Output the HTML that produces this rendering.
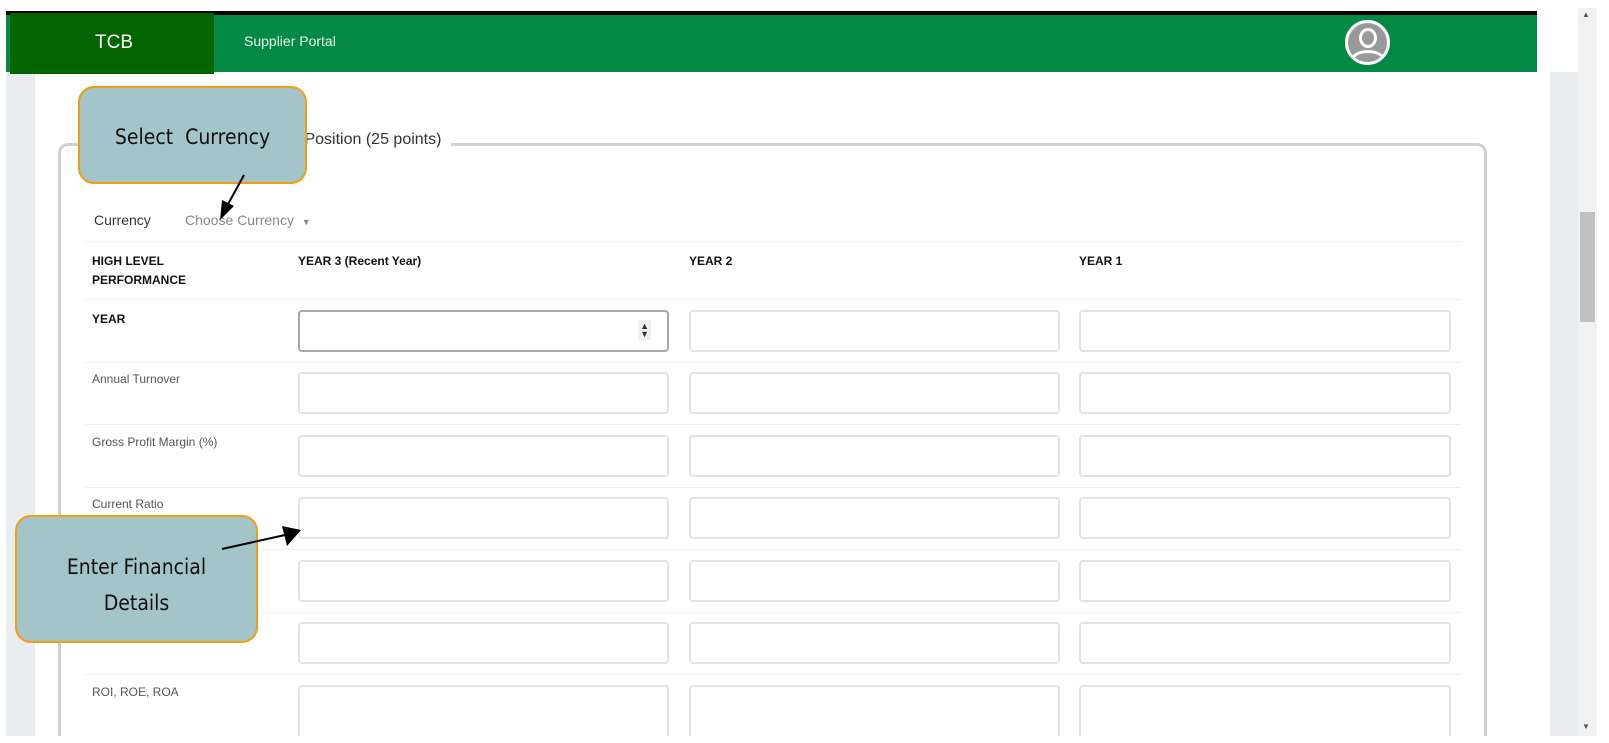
<!DOCTYPE html>
<html style="width:1609px;height:743px;overflow:hidden"><head><meta charset="utf-8"><style>
*{margin:0;padding:0;box-sizing:border-box}
body{width:1609px;height:743px;overflow:hidden;background:#fff;font-family:"Liberation Sans",sans-serif;position:relative}
.abs{position:absolute}
.inp{position:absolute;height:42px;border:2px solid #e3e3e3;border-radius:4px;background:#fff}
.sep{position:absolute;left:85px;width:1376px;height:1px;background:#eef0f2}
.lbl{position:absolute;left:92px;font-size:12px;color:#555}
.hd{position:absolute;font-size:12px;font-weight:bold;color:#111;line-height:19px}
.callout{position:absolute;background:#a3c4c8;border:2px solid #f39c12;border-radius:16px;color:#111;font-size:21px;text-align:center;font-family:"DejaVu Sans Condensed","Liberation Sans Narrow","Liberation Sans",sans-serif}
</style></head><body>
<div class="abs" style="left:6px;top:72px;width:29px;height:664px;background:#e9edf0"></div>
<div class="abs" style="left:1550px;top:72px;width:28px;height:664px;background:#e9edf0"></div>
<div class="abs" style="left:1578px;top:8px;width:19px;height:728px;background:#f1f1f1"></div>
<div class="abs" style="left:1580px;top:212px;width:15px;height:110px;background:#c1c1c1"></div>
<div class="abs" style="left:1582px;top:10px;font-size:8px;color:#555">▲</div>
<div class="abs" style="left:1582px;top:722px;font-size:8px;color:#555">▼</div>
<div class="abs" style="left:6px;top:11px;width:1531px;height:4px;background:#000"></div>
<div class="abs" style="left:6px;top:15px;width:1531px;height:57px;background:#028a45"></div>
<div class="abs" style="left:10px;top:13px;width:204px;height:61px;background:#026502"></div>
<div class="abs" style="left:95px;top:32px;color:#fff;font-size:19px">TCB</div>
<div class="abs" style="left:244px;top:33px;color:#e8f5e8;font-size:14px">Supplier Portal</div>
<div class="abs" style="left:1345px;top:20px;width:45px;height:45px;border-radius:50%;border:3px solid #fff;background:#999;overflow:hidden">
<div class="abs" style="left:11px;top:5px;width:18px;height:20px;border-radius:50%;border:3px solid #fff;background:#999"></div>
<div class="abs" style="left:3px;top:27px;width:34px;height:20px;border-radius:50% 50% 0 0;background:#999;border:3px solid #fff"></div>
</div>
<div class="abs" style="left:58px;top:143px;width:1429px;height:600px;border:3px solid #d0d0d0;border-bottom:none;border-radius:10px 10px 0 0"></div>
<div class="abs" style="left:226px;top:131px;background:#fff;padding:0 10px;font-size:16px;color:#333">Financial Position (25 points)</div>
<div class="abs" style="left:94px;top:212px;font-size:14px;color:#333">Currency</div>
<div class="abs" style="left:185px;top:212px;font-size:14px;color:#888">Choose Currency &nbsp;<span style="font-size:9px">▼</span></div>
<div class="sep" style="top:241px"></div>
<div class="hd" style="left:92px;top:252px">HIGH LEVEL<br>PERFORMANCE</div>
<div class="hd" style="left:298px;top:252px">YEAR 3 (Recent Year)</div>
<div class="hd" style="left:689px;top:252px">YEAR 2</div>
<div class="hd" style="left:1079px;top:252px">YEAR 1</div>
<div class="sep" style="top:299px"></div>
<div class="hd" style="left:92px;top:310px">YEAR</div>
<div class="sep" style="top:362px"></div>
<div class="lbl" style="top:372px">Annual Turnover</div>
<div class="sep" style="top:424px"></div>
<div class="lbl" style="top:435px">Gross Profit Margin (%)</div>
<div class="sep" style="top:487px"></div>
<div class="lbl" style="top:497px">Current Ratio</div>
<div class="sep" style="top:549px"></div>
<div class="sep" style="top:612px"></div>
<div class="sep" style="top:674px"></div>
<div class="lbl" style="top:685px">ROI, ROE, ROA</div>
<div class="inp" style="left:298px;top:310px;width:371px;border-color:#a8a8a8"><span style="position:absolute;right:16px;top:8px;font-size:9px;line-height:8px;color:#333;background:#eee;padding:2px">▲<br>▼</span></div>
<div class="inp" style="left:689px;top:310px;width:371px"></div>
<div class="inp" style="left:1079px;top:310px;width:372px"></div>
<div class="inp" style="left:298px;top:372px;width:371px"></div><div class="inp" style="left:689px;top:372px;width:371px"></div><div class="inp" style="left:1079px;top:372px;width:372px"></div>
<div class="inp" style="left:298px;top:435px;width:371px"></div><div class="inp" style="left:689px;top:435px;width:371px"></div><div class="inp" style="left:1079px;top:435px;width:372px"></div>
<div class="inp" style="left:298px;top:497px;width:371px"></div><div class="inp" style="left:689px;top:497px;width:371px"></div><div class="inp" style="left:1079px;top:497px;width:372px"></div>
<div class="inp" style="left:298px;top:560px;width:371px"></div><div class="inp" style="left:689px;top:560px;width:371px"></div><div class="inp" style="left:1079px;top:560px;width:372px"></div>
<div class="inp" style="left:298px;top:622px;width:371px"></div><div class="inp" style="left:689px;top:622px;width:371px"></div><div class="inp" style="left:1079px;top:622px;width:372px"></div>
<div class="inp" style="left:298px;top:685px;width:371px;height:58px;border-bottom:none"></div><div class="inp" style="left:689px;top:685px;width:371px;height:58px;border-bottom:none"></div><div class="inp" style="left:1079px;top:685px;width:372px;height:58px;border-bottom:none"></div>
<div class="abs" style="left:0;top:736px;width:1609px;height:7px;background:#fff"></div>
<div class="callout" style="left:78px;top:86px;width:229px;height:98px;line-height:98px">Select&nbsp; Currency</div>
<div class="callout" style="left:15px;top:515px;width:243px;height:128px;padding-top:32px;line-height:36px">Enter Financial<br>Details</div>
<svg class="abs" style="left:0;top:0" width="1609" height="743">
<line x1="244" y1="175" x2="227" y2="206" stroke="#000" stroke-width="2"/>
<polygon points="220,220 222,200 234,206" fill="#000"/>
<line x1="222" y1="549" x2="285" y2="535" stroke="#000" stroke-width="2"/>
<polygon points="301,530 282,526 287,546" fill="#000"/>
</svg>
</body></html>
